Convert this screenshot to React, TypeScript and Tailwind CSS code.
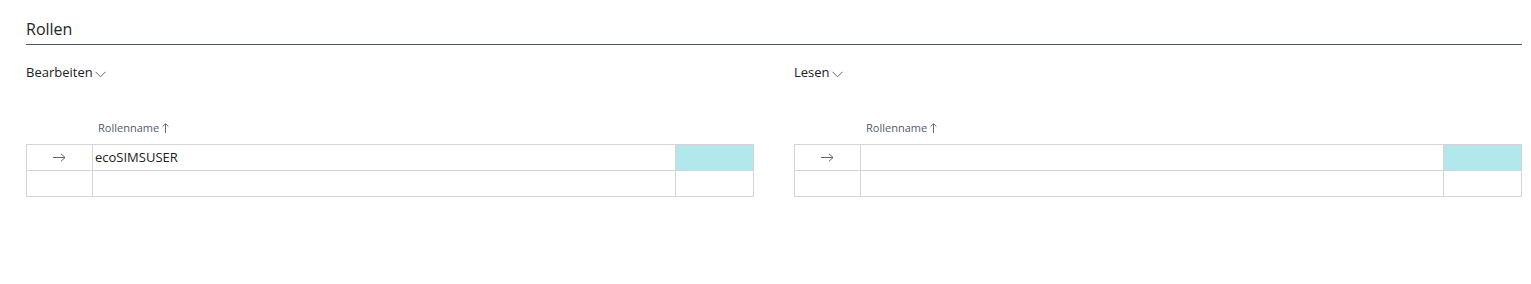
import React from "react";

const font = { fontFamily: "'Segoe UI', 'Open Sans', 'Noto Sans', sans-serif" };

function ChevronDown() {
  return (
    <svg width="11" height="7" viewBox="0 0 11 7" className="ml-[2px] mt-[2px]">
      <path d="M0.5 0.8 L5.5 5.8 L10.5 0.8" fill="none" stroke="#555" strokeWidth="0.9" />
    </svg>
  );
}

function ArrowRight() {
  return (
    <svg width="13" height="9" viewBox="0 0 13 9">
      <path d="M0 4.5 H12 M8 0.7 L12 4.5 L8 8.3" fill="none" stroke="#555" strokeWidth="0.9" />
    </svg>
  );
}

function ArrowUp() {
  return (
    <svg width="7" height="10" viewBox="0 0 7 10" className="ml-[3px]">
      <path d="M3.5 10 V0.8 M0.6 3.6 L3.5 0.8 L6.4 3.6" fill="none" stroke="#505c6d" strokeWidth="0.9" />
    </svg>
  );
}

function RoleTable({ label, value }: { label: string; value: string }) {
  return (
    <div className="flex-1 flex flex-col">
      <div className="flex items-center h-[18px] mt-[19px] text-[13px] text-[#212121]">
        {label}
        <ChevronDown />
      </div>
      <div className="flex items-end h-[34px] mt-[28px] pb-[8px]">
        <div className="w-[66px]" />
        <div className="pl-[6px] text-[11px] text-[#505c6d] flex items-center">
          Rollenname<ArrowUp />
        </div>
      </div>
      <div className="border border-[#d5d5d5]">
        <div className="flex h-[26px] border-b border-[#d5d5d5]">
          <div className="w-[66px] border-r border-[#d5d5d5] flex items-center justify-center">
            <ArrowRight />
          </div>
          <div className="flex-1 border-r border-[#d5d5d5] pl-[2px] flex items-center text-[13px] text-[#212121]">
            {value}
          </div>
          <div className="w-[77px] bg-[#b2e8ec]" />
        </div>
        <div className="flex h-[25px]">
          <div className="w-[66px] border-r border-[#d5d5d5]" />
          <div className="flex-1 border-r border-[#d5d5d5]" />
          <div className="w-[77px]" />
        </div>
      </div>
    </div>
  );
}

export default function App() {
  return (
    <div className="w-[1531px] h-[284px] bg-white pl-[26px] pr-[9px] pt-[18px]" style={font}>
      <div className="text-[16px] font-medium text-[#1f1f1f] leading-[22px] pb-[4px] border-b border-[#4a5866]">
        Rollen
      </div>
      <div className="flex gap-[40px]">
        <RoleTable label="Bearbeiten" value="ecoSIMSUSER" />
        <RoleTable label="Lesen" value="" />
      </div>
    </div>
  );
}
